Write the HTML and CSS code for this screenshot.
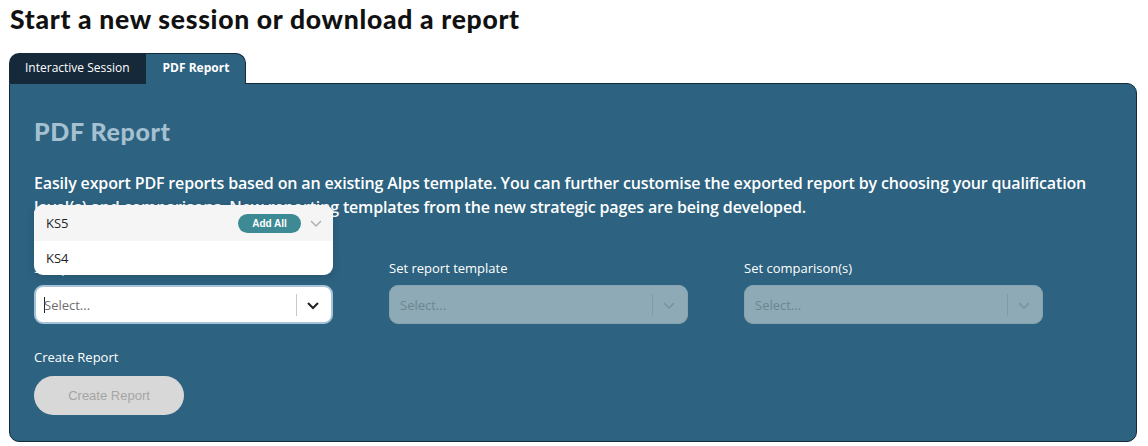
FILE: index.html
```html
<!DOCTYPE html>
<html lang="en">
<head>
  <meta charset="UTF-8">
  <title>Start a new session or download a report</title>
  <link rel="stylesheet" href="styles.css">
</head>
<body>
  <div class="page">
    <h1>Start a new session or download a report</h1>

    <div class="tabs">
      <div class="tab">Interactive Session</div>
      <div class="tab active">PDF Report</div>
    </div>

    <div class="panel">
      <h2>PDF Report</h2>
      <p class="intro">Easily export PDF reports based on an existing Alps template. You can further customise the exported report by choosing your qualification level(s) and comparisons. New reporting templates from the new strategic pages are being developed.</p>

      <div class="fields">
        <div class="field">
          <label>Set qualification(s)</label>
          <div class="select-wrap">
            <div class="menu">
              <div class="option focused">
                <span>KS5</span>
                <button class="add-all">Add All</button>
                <svg class="chev light" width="16" height="16" viewBox="0 0 16 16"><polyline points="3,6 8,11 13,6"/></svg>
              </div>
              <div class="option"><span>KS4</span></div>
            </div>
            <div class="select focus">
              <span class="placeholder"><span class="cursor"></span>Select...</span>
              <span class="sep"></span>
              <svg class="chev" width="16" height="16" viewBox="0 0 16 16"><polyline points="3,6 8,11 13,6"/></svg>
            </div>
          </div>
        </div>

        <div class="field">
          <label>Set report template</label>
          <div class="select disabled">
            <span class="placeholder">Select...</span>
            <span class="sep"></span>
            <svg class="chev" width="16" height="16" viewBox="0 0 16 16"><polyline points="3,6 8,11 13,6"/></svg>
          </div>
        </div>

        <div class="field">
          <label>Set comparison(s)</label>
          <div class="select disabled">
            <span class="placeholder">Select...</span>
            <span class="sep"></span>
            <svg class="chev" width="16" height="16" viewBox="0 0 16 16"><polyline points="3,6 8,11 13,6"/></svg>
          </div>
        </div>
      </div>

      <label class="create-label">Create Report</label>
      <button class="create-btn" disabled>Create Report</button>
    </div>
  </div>
</body>
</html>
```

FILE: styles.css
```css
* { margin: 0; padding: 0; box-sizing: border-box; }

body {
  font-family: 'Open Sans', sans-serif;
  background: #ffffff;
  color: #111;
}

.page {
  padding: 2px 11px 0 9px;
}

h1 {
  font-family: 'Lato', sans-serif;
  font-weight: 900;
  font-size: 26.5px;
  line-height: 34px;
  color: #111;
  padding-left: 1px;
  letter-spacing: 0.7px;
}

.tabs {
  display: flex;
  margin-top: 17px;
}

.tab {
  font-size: 12px;
  line-height: 30px;
  height: 30px;
  color: #fff;
  background: #16293a;
  padding: 0 15px 0 16px;
  border-radius: 10px 0 0 0;
}

.tab.active {
  background: #2d6280;
  font-weight: 700;
  padding: 0 16px 0 17px;
  border-radius: 0 10px 0 0;
  border: 1px solid #132a38;
  border-bottom: none;
  line-height: 28px;
  position: relative;
  z-index: 1;
  margin-bottom: -1px;
  height: 31px;
}

.panel {
  background: #2d6280;
  border: 1px solid #132a38;
  border-radius: 0 10px 10px 10px;
  padding: 32px 24px 26px 24px;
  color: #fff;
}

h2 {
  font-family: 'Lato', sans-serif;
  font-weight: 900;
  font-size: 25px;
  line-height: 30px;
  letter-spacing: 0.6px;
  color: #a4c0d1;
}

.intro {
  margin-top: 25px;
  font-size: 16px;
  font-weight: 600;
  line-height: 24px;
  letter-spacing: -0.15px;
}

.fields {
  display: flex;
  gap: 56px;
  margin-top: 40px;
}

.field {
  width: 299px;
  display: flex;
  flex-direction: column;
}

label {
  display: block;
  font-size: 13px;
  line-height: 18px;
  margin-bottom: 8px;
}

.select-wrap {
  position: relative;
}

.select {
  height: 39px;
  border-radius: 9px;
  display: flex;
  align-items: center;
  padding: 0 10px 0 10px;
  font-size: 13px;
}

.select .placeholder {
  flex: 1;
  display: flex;
  align-items: center;
}

.select .sep {
  width: 1px;
  height: 22px;
  margin: 0 8px 0 4px;
}

.select.focus {
  background: #fff;
  border: 2px solid #a6c4d8;
  color: #6f6f6f;
  padding-left: 8px;
}

.select.focus .sep { background: #c8c8c8; }

.cursor {
  display: inline-block;
  width: 1px;
  height: 16px;
  background: #222;
  margin-right: -1px;
}

.select.disabled {
  background: #8eaab6;
  border: 1px solid #86a3b0;
  color: #6c8691;
}

.select.disabled .sep { background: #7f9ba7; }

.chev {
  fill: none;
  stroke: #222;
  stroke-width: 2;
}

.select.disabled .chev { stroke: #76929e; stroke-width: 1.5; }

.chev.light { stroke: #b0b0b0; stroke-width: 1.5; }

.menu {
  position: absolute;
  left: 0;
  right: 0;
  bottom: calc(100% + 10px);
  background: #fff;
  border-radius: 9px;
  overflow: hidden;
  box-shadow: 0 2px 8px rgba(0, 0, 0, 0.15);
  color: #222;
  z-index: 2;
}

.option {
  display: flex;
  align-items: center;
  height: 34px;
  padding: 0 9px 0 12px;
  font-size: 13px;
}

.option span { flex: 1; }

.option.focused {
  height: 36px;
  background: #f5f5f5;
}

.add-all {
  background: #3d8a94;
  color: #fff;
  border: none;
  border-radius: 10px;
  font-family: 'Liberation Sans', Arial, sans-serif;
  font-weight: 700;
  font-size: 10px;
  width: 63px;
  height: 19px;
  margin-right: 7px;
}

.create-label {
  margin-top: 24px;
  margin-bottom: 10px;
}

.create-btn {
  width: 150px;
  height: 39px;
  border: none;
  border-radius: 20px;
  background: #d8d8d8;
  color: #a5a5a5;
  font-family: 'Liberation Sans', Arial, sans-serif;
  font-size: 13px;
}
```
